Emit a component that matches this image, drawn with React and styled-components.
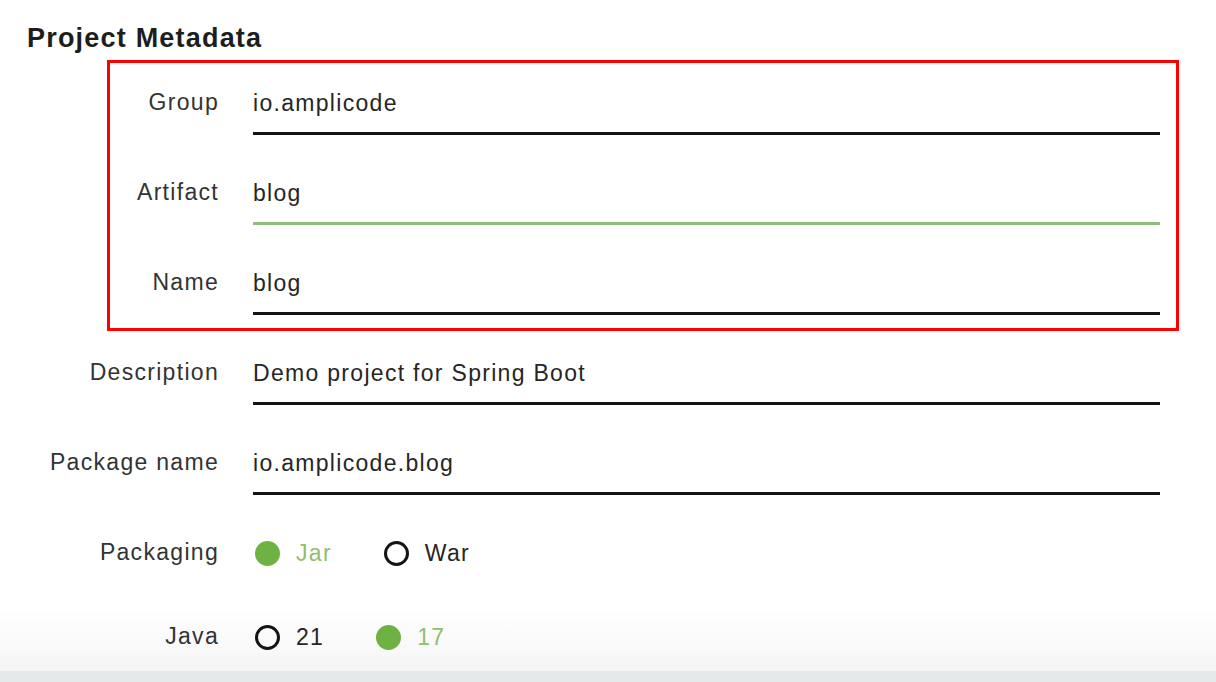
import React from "react";
import styled, { createGlobalStyle } from "styled-components";

const GlobalStyle = createGlobalStyle`
  html, body {
    margin: 0;
    padding: 0;
    background: #ffffff;
  }
  body {
    font-family: "Liberation Sans", Arial, sans-serif;
    color: #2b2b2b;
  }
`;

const GREEN = "#6fb244";

export default function App() {
  const boxed = [
    { label: "Group", value: "io.amplicode" },
    { label: "Artifact", value: "blog", focused: true },
    { label: "Name", value: "blog" },
  ];
  const rest = [
    { label: "Description", value: "Demo project for Spring Boot" },
    { label: "Package name", value: "io.amplicode.blog" },
  ];
  const radios = [
    { label: "Packaging", options: ["Jar", "War"], selected: "Jar" },
    { label: "Java", options: ["21", "17"], selected: "17" },
  ];

  return (
    <Page>
      <GlobalStyle />
      <Title>Project Metadata</Title>
      <Form>
        <Highlight>
          {boxed.map((f) => (
            <Row key={f.label} $labelWidth={109}>
              <Label>{f.label}</Label>
              <Field $focused={f.focused}>{f.value}</Field>
            </Row>
          ))}
        </Highlight>
        {rest.map((f) => (
          <Row key={f.label} $labelWidth={219}>
            <Label>{f.label}</Label>
            <Field>{f.value}</Field>
          </Row>
        ))}
        {radios.map((r) => (
          <Row key={r.label} $labelWidth={219}>
            <Label>{r.label}</Label>
            <RadioGroup>
              {r.options.map((o) => (
                <Option key={o} $checked={o === r.selected}>
                  <Dot $checked={o === r.selected} />
                  {o}
                </Option>
              ))}
            </RadioGroup>
          </Row>
        ))}
      </Form>
      <BottomBar />
    </Page>
  );
}

const Page = styled.div`
  height: 100vh;
  overflow: hidden;
  box-sizing: border-box;
  padding-top: 22px;
  background: linear-gradient(
    to bottom,
    #ffffff 0,
    #ffffff 605px,
    #f5f5f5 671px
  );
`;

const Title = styled.h2`
  margin: 0 0 6px 27px;
  font-size: 27px;
  line-height: 32px;
  font-weight: 700;
  letter-spacing: 1.2px;
  color: #1d1d1d;
`;

const Form = styled.div`
  display: flex;
  flex-direction: column;
`;

const Highlight = styled.div`
  margin: 0 0 2px 107px;
  width: 1072px;
  box-sizing: border-box;
  border: 3px solid #ff0000;
  padding-bottom: 13px;

  & > div:last-child {
    padding-bottom: 0;
  }
`;

const Row = styled.div`
  display: grid;
  grid-template-columns: ${(p) => p.$labelWidth}px 907px;
  column-gap: 34px;
  align-items: start;
  padding: 26px 0 18px;
`;

const Label = styled.div`
  text-align: right;
  font-size: 23px;
  line-height: 26px;
  letter-spacing: 1.3px;
  color: #333333;
`;

const Field = styled.div`
  font-size: 23px;
  line-height: 28px;
  letter-spacing: 1.3px;
  color: #262626;
  padding-bottom: 15px;
  border-bottom: 3px solid ${(p) => (p.$focused ? "#93bd7c" : "#141414")};
`;

const RadioGroup = styled.div`
  display: flex;
  align-items: center;
  gap: 52px;
  padding: 0 0 12px 2px;
`;

const Option = styled.label`
  display: flex;
  align-items: center;
  gap: 16px;
  font-size: 23px;
  line-height: 28px;
  letter-spacing: 1.3px;
  color: ${(p) => (p.$checked ? "#8fbf72" : "#262626")};
`;

const Dot = styled.span`
  width: 25px;
  height: 25px;
  box-sizing: border-box;
  border-radius: 50%;
  background: ${(p) => (p.$checked ? GREEN : "transparent")};
  border: ${(p) => (p.$checked ? "none" : "3px solid #141414")};
`;

const BottomBar = styled.div`
  position: fixed;
  left: 0;
  right: 0;
  bottom: 0;
  height: 11px;
  background: #e5e9e9;
`;
